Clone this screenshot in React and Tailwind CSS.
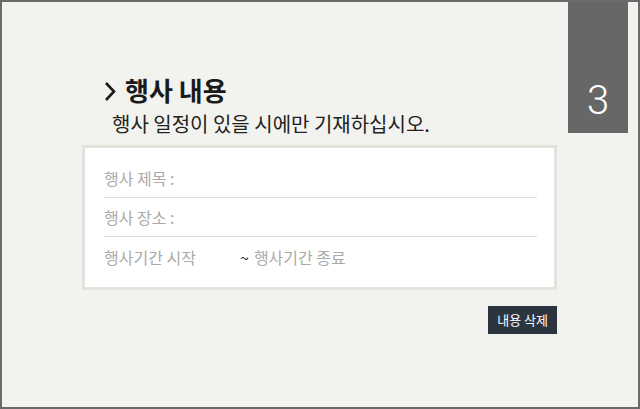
export default function App() {
  const kr = { fontFamily: '"Noto Sans CJK KR", "Noto Sans", sans-serif' };

  return (
    <div className="w-[640px] h-[409px] border-2 border-[#6b6b6b] bg-[#f2f2ee] flex" style={kr}>
      <div className="flex-1 pl-[80px] pt-[72px]">
        <h1 className="flex items-center text-[26px] leading-[32px] font-bold text-[#1a1a1a] pl-[22px] gap-[9px]">
          <svg width="12" height="21" viewBox="0 0 12 21" fill="none" stroke="#1a1a1a" strokeWidth="2.6" className="mt-[2px]">
            <path d="M2 2 L10 10.5 L2 19" />
          </svg>
          <span>행사 내용</span>
        </h1>
        <p className="text-[20px] leading-[26px] text-[#222] pl-[30px] mt-[5px]">
          행사 일정이 있을 시에만 기재하십시오.
        </p>

        <div className="w-[475px] mt-[8px]">
          <div className="border-[3px] border-[#e3e3dd] bg-white pl-[19px] pr-[17px] py-[11px] text-[16px] text-[#aaaaaa]">
            <div className="h-[39px] flex items-center border-b border-[#dcdcdc]">행사 제목 :</div>
            <div className="h-[39px] flex items-center border-b border-[#dcdcdc]">행사 장소 :</div>
            <div className="h-[39px] flex items-center">
              <span className="w-[136px]">행사기간 시작</span>
              <span className="text-[#333] mr-[5px]">~</span>
              <span>행사기간 종료</span>
            </div>
          </div>
          <div className="flex justify-end mt-[16px]">
            <button className="h-[28px] px-[9px] bg-[#2c3440] text-white text-[13px]">내용 삭제</button>
          </div>
        </div>
      </div>

      <div className="w-[60px] h-[131px] mr-[10px] bg-[#676767] flex items-end justify-center pb-[12px]">
        <span className="text-[40px] leading-[40px] font-light text-white" style={{ fontFamily: 'Roboto, "Open Sans", sans-serif' }}>3</span>
      </div>
    </div>
  );
}
